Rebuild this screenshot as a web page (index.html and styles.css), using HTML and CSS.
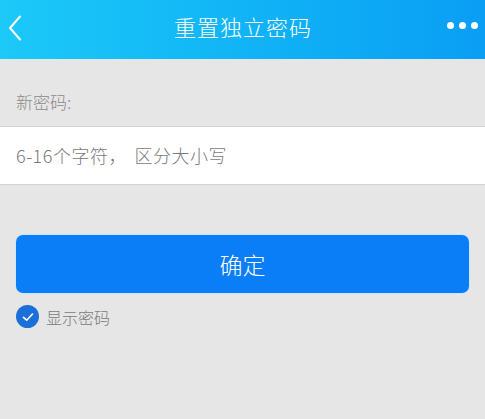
FILE: index.html
```html
<!DOCTYPE html>
<html lang="zh-CN">
<head>
<meta charset="utf-8">
<title>重置独立密码</title>
<link rel="stylesheet" href="styles.css">
</head>
<body>
<header class="topbar">
  <span class="back">
    <svg width="14" height="26" viewBox="0 0 14 26"><path d="M12 1.5 L2 13 L12 24.5" fill="none" stroke="#fff" stroke-width="2" stroke-linecap="round" stroke-linejoin="round"/></svg>
  </span>
  <h1 class="title">重置独立密码</h1>
  <span class="more"><i></i><i></i><i></i></span>
</header>
<main class="content">
  <div class="label">新密码:</div>
  <div class="field">6-16个字符<span class="comma">，</span>区分大小写</div>
  <div class="actions">
    <button class="btn">确定</button>
    <label class="show">
      <span class="check">
        <svg width="14" height="14" viewBox="0 0 14 14"><path d="M2.5 7.3 L5.7 10.2 L11.5 4" fill="none" stroke="#fff" stroke-width="1.6" stroke-linecap="round" stroke-linejoin="round"/></svg>
      </span>
      <span class="show-text">显示密码</span>
    </label>
  </div>
</main>
</body>
</html>
```
FILE: styles.css
```css
html, body {
  margin: 0;
  padding: 0;
}
body {
  width: 485px;
  height: 419px;
  overflow: hidden;
  background: #e6e6e6;
  font-family: "Noto Sans CJK SC", "Noto Sans", sans-serif;
}
.topbar {
  height: 59px;
  background: linear-gradient(90deg, #1cc9f8 0%, #12b6f6 45%, #0a9ef4 100%);
  display: flex;
  align-items: center;
}
.back {
  width: 40px;
  height: 26px;
  margin-left: 8px;
  margin-top: -3px;
  display: flex;
}
.title {
  flex: 1;
  margin: 0;
  text-align: center;
  color: #fff;
  font-weight: 300;
  font-size: 22px;
  line-height: 26px;
  margin-top: -8px;
  letter-spacing: 1px;
}
.more {
  width: 40px;
  display: flex;
  justify-content: flex-end;
  gap: 5px;
  margin-right: 7px;
  margin-top: -9px;
}
.more i {
  width: 7px;
  height: 7px;
  border-radius: 50%;
  background: #fff;
  display: block;
}
.content {
  display: flex;
  flex-direction: column;
}
.label {
  padding: 31px 16px 0;
  height: 36px;
  font-size: 17px;
  line-height: 24px;
  color: #8a8a8a;
  font-weight: 300;
}
.field {
  background: #fff;
  border-top: 1.5px solid #d2d2d2;
  border-bottom: 1.5px solid #d2d2d2;
  height: 57px;
  padding: 0 16px;
  font-size: 18px;
  line-height: 57px;
  color: #7a7a7a;
  font-weight: 300;
  letter-spacing: 0.5px;
}
.comma {
  display: inline-block;
  width: 26px;
}
.actions {
  padding: 50px 16px 0;
  display: flex;
  flex-direction: column;
}
.btn {
  height: 58px;
  border: none;
  border-radius: 7px;
  background: #0a7ef7;
  color: #fff;
  font-family: inherit;
  font-size: 23px;
  font-weight: 300;
  padding: 0;
  box-shadow: 0 0 0 1px #cfe6fb;
}
.show {
  display: flex;
  align-items: center;
  margin-top: 12px;
  gap: 7px;
}
.check {
  width: 23px;
  height: 23px;
  border-radius: 50%;
  background: #1a6fd8;
  display: flex;
  align-items: center;
  justify-content: center;
}
.show-text {
  font-size: 16px;
  color: #7a7a7a;
  line-height: 22px;
  font-weight: 300;
}
```
